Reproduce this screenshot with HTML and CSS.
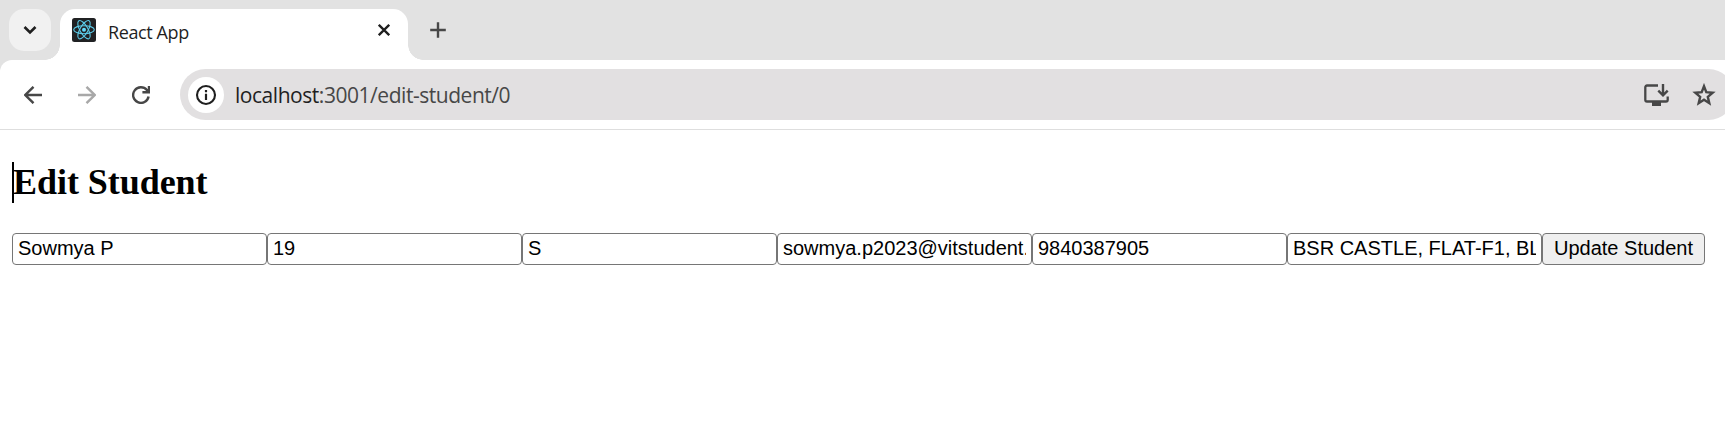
FILE: index.html
```html
<!DOCTYPE html>
<html lang="en">
<head>
<meta charset="utf-8">
<title>React App</title>
<link rel="stylesheet" href="styles.css">
</head>
<body>
<header class="browser">
  <div class="tabstrip">
    <div class="tab-search"><svg width="42" height="42" viewBox="0 0 42 42"><path d="M15.500 18l5.500 5.500 5.500-5.500" fill="none" stroke="#1f1f1f" stroke-width="2.600"/></svg></div>
    <div class="tab">
      <svg class="favicon" width="24" height="24" viewBox="0 0 24 24"><rect width="24" height="24" rx="2.500" fill="#202123"/><g fill="none" stroke="#5ccbe8" stroke-width="1.100"><ellipse cx="12" cy="11.700" rx="10.300" ry="4"/><ellipse cx="12" cy="11.700" rx="10.300" ry="4" transform="rotate(60 12 11.700)"/><ellipse cx="12" cy="11.700" rx="10.300" ry="4" transform="rotate(120 12 11.700)"/></g><circle cx="12" cy="11.700" r="2" fill="#61dafb"/></svg>
      <span class="tab-title">React App</span>
      <svg class="close" width="12" height="12" viewBox="0 0 12 12"><path d="M.8.8l10.400 10.400M11.200.8L.8 11.200" stroke="#1f1f1f" stroke-width="2.300"/></svg>
    </div>
    <svg class="new-tab" width="16" height="16" viewBox="0 0 16 16"><path d="M8 .2v15.600M.2 8h15.600" stroke="#474747" stroke-width="2.400"/></svg>
  </div>
  <div class="toolbar">
    <nav class="nav">
      <svg width="18" height="18" viewBox="0 0 18 18"><path d="M18 9H1.500M9.500.8L1.300 9l8.200 8.200" fill="none" stroke="#474747" stroke-width="2.400"/></svg>
      <svg width="18" height="18" viewBox="0 0 18 18"><path d="M0 9h16.500M8.500.8L16.700 9l-8.200 8.200" fill="none" stroke="#a8a8a8" stroke-width="2.400"/></svg>
      <svg width="18" height="18" viewBox="0 0 18 18"><path d="M16.600 10.500a7.800 7.800 0 1 1-1.700-6.500l1.800 2M17 0v6.300h-6.600" fill="none" stroke="#474747" stroke-width="2.400"/></svg>
    </nav>
    <div class="omnibox">
      <span class="site-info"><svg width="22" height="22" viewBox="0 0 22 22"><circle cx="11" cy="11" r="9" fill="none" stroke="#1f1f1f" stroke-width="2.100"/><path d="M11 9.700V16M11 6v2.200" stroke="#1f1f1f" stroke-width="2.200"/></svg></span>
      <span class="url"><b>localhost</b>:3001/edit-student/0</span>
      <svg class="install" width="25" height="22" viewBox="0 0 25 22"><path d="M14 1.500H3a1.700 1.700 0 0 0-1.700 1.700v12.600A1.700 1.700 0 0 0 3 17.500h19a1.700 1.700 0 0 0 1.700-1.700V12.500" fill="none" stroke="#474747" stroke-width="2.300"/><path d="M8 17.500h9V22H8z" fill="#474747"/><path d="M19 0v11M14.300 6.700l4.700 4.700 4.700-4.700" fill="none" stroke="#474747" stroke-width="2.400"/></svg>
      <svg class="star" width="24" height="24" viewBox="0 0 24 24"><path d="M12 3.200l2.300 6 6.400.5-4.900 4.200 1.500 6.300-5.300-3.400-5.300 3.400 1.500-6.300-4.900-4.200 6.400-.5z" fill="none" stroke="#474747" stroke-width="2.400"/></svg>
    </div>
  </div>
</header>
<main class="page">
  <h2 class="heading">Edit Student</h2>
  <form class="student-form">
    <input class="field" value="Sowmya P"><input class="field" value="19"><input class="field" value="S"><input class="field" value="sowmya.p2023@vitstudent.ac.in"><input class="field" value="9840387905"><input class="field" value="BSR CASTLE, FLAT-F1, BLOCK"><button class="update" type="button">Update Student</button>
  </form>
</main>
</body>
</html>
```
FILE: styles.css
```css
* { box-sizing: border-box; }
body { margin: 0; height: 433px; overflow: hidden; background: #fff; }
svg { display: block; flex: none; }
.browser { background: #e2e2e2; }
.tabstrip { display: flex; height: 60px; padding: 9px 0 0 9px; }
.tab-search { width: 42px; height: 42px; border-radius: 15px; background: #f1f1f1; }
.tab { position: relative; display: flex; align-items: flex-start; width: 348px; height: 51px; margin-left: 9px; padding: 9px 18px 0 12px; border-radius: 15px 15px 0 0; background: #fff; }
.tab::before, .tab::after { content: ""; position: absolute; bottom: 0; width: 15px; height: 15px; }
.tab::before { right: 100%; background: radial-gradient(circle at 0 0, transparent 14.5px, #fff 15px); }
.tab::after { left: 100%; background: radial-gradient(circle at 100% 0, transparent 14.5px, #fff 15px); }
.tab-title { margin-left: 12px; font: 18px/28px "Open Sans", sans-serif; letter-spacing: -0.4px; color: #1f1f1f; }
.close { margin: 6px 0 0 auto; }
.new-tab { margin: 13px 0 0 22px; }
.toolbar { display: flex; align-items: center; height: 70px; overflow: hidden; border-bottom: 1px solid #dedede; border-radius: 12px 0 0 0; background: #fff; }
.nav { display: flex; flex: none; gap: 36px; width: 180px; padding-left: 24px; }
.omnibox { display: flex; align-items: center; width: 1554px; height: 51px; flex: none; padding: 0 18px 0 8px; border-radius: 25.5px; background: #e2e0e1; }
.site-info { display: grid; place-items: center; width: 36px; height: 36px; border-radius: 50%; background: #fff; }
.url { margin-left: 11px; font: 21px/30px "Open Sans", sans-serif; letter-spacing: -0.46px; color: #474747; }
.url b { font-weight: 400; color: #1f1f1f; }
.install { margin-left: auto; }
.star { margin-left: 23px; }
.page { padding: 32px 12px 0; }
.heading { width: max-content; margin: 0 0 30px; border-left: 2px solid #000; font: bold 36px/41px "Liberation Serif", serif; letter-spacing: -0.05px; text-indent: -1px; }
.student-form { display: flex; }
.field { width: 255px; height: 32px; margin: 0; padding: 1px 5px 3px; border: 1px solid #767676; border-radius: 4px; background: #fff; color: #000; font: 20px/26px "Liberation Sans", sans-serif; }
.update { width: 163px; height: 32px; margin: 0; padding: 0 0 2px; border: 1px solid #767676; border-radius: 4px; background: #efefef; color: #000; font: 20px/28px "Liberation Sans", sans-serif; }
```
